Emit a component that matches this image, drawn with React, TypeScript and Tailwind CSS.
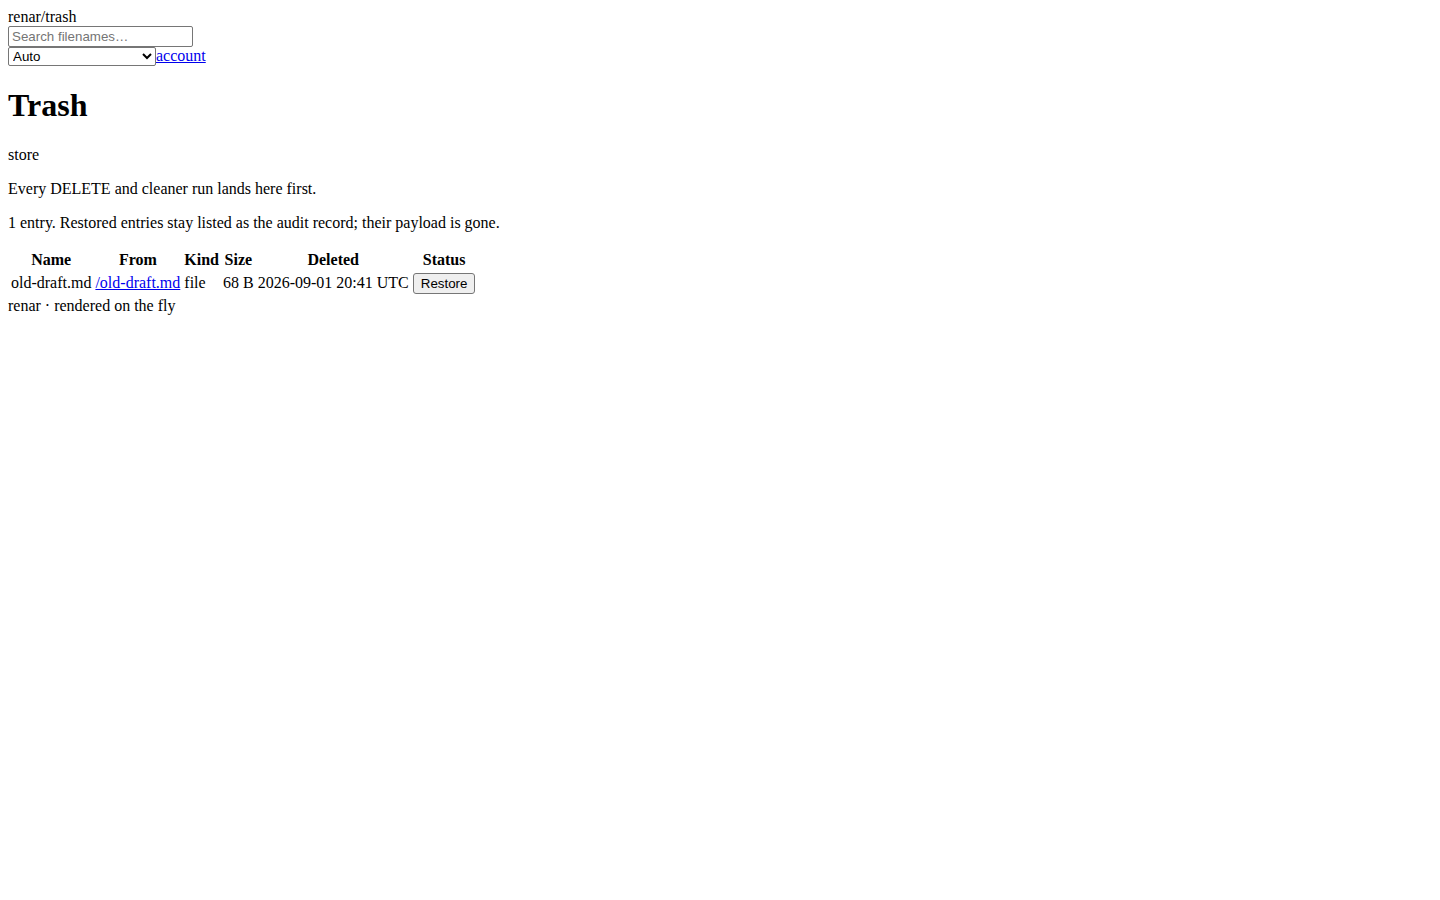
import React from "react";

const rows = [
  {
    name: "old-draft.md",
    from: "/old-draft.md",
    kind: "file",
    size: "68 B",
    deleted: "2026-09-01 20:41 UTC",
  },
];

export default function App() {
  return (
    <div className="min-h-screen bg-white p-2 font-['Liberation_Serif',serif] text-base leading-[normal] text-black">
      <header>
        <div>renar/trash</div>
        <form onSubmit={(e) => e.preventDefault()}>
          <input
            type="search"
            placeholder="Search filenames…"
            className="h-[21px] w-[185px] rounded-[2px] border border-[#767676] px-[3px] py-[1px] font-['Liberation_Sans',Arial,sans-serif] text-[13.33px] leading-[normal] placeholder:text-[#757575]"
          />
        </form>
        <div className="flex h-[19px] items-baseline">
          <select className="h-[19px] w-[148px] rounded-[2px] border border-[#767676] bg-white font-['Liberation_Sans',Arial,sans-serif] text-[13.33px] leading-[normal]">
            <option>Auto</option>
            <option>Light</option>
            <option>Dark</option>
          </select>
          <a href="#" className="text-[#0000ee] underline">
            account
          </a>
        </div>
      </header>

      <main>
        <h1 className="my-[21.44px] text-[32px] font-bold">Trash</h1>
        <p className="my-4">store</p>
        <p className="my-4">Every DELETE and cleaner run lands here first.</p>
        <p className="my-4">
          1 entry. Restored entries stay listed as the audit record; their payload is gone.
        </p>

        <table className="border-separate border-spacing-[2px]">
          <thead>
            <tr>
              <th className="p-[1px] text-center font-bold">Name</th>
              <th className="p-[1px] text-center font-bold">From</th>
              <th className="p-[1px] text-center font-bold">Kind</th>
              <th className="p-[1px] text-center font-bold">Size</th>
              <th className="p-[1px] text-center font-bold">Deleted</th>
              <th className="p-[1px] text-center font-bold">Status</th>
            </tr>
          </thead>
          <tbody>
            {rows.map((r) => (
              <tr key={r.name}>
                <td className="p-[1px]">{r.name}</td>
                <td className="p-[1px]">
                  <a href="#" className="text-[#0000ee] underline">
                    {r.from}
                  </a>
                </td>
                <td className="p-[1px]">{r.kind}</td>
                <td className="p-[1px]">{r.size}</td>
                <td className="p-[1px]">{r.deleted}</td>
                <td className="p-[1px]">
                  <button className="h-[21px] rounded-[3px] border border-[#767676] bg-[#efefef] px-[7px] py-[1px] font-['Liberation_Sans',Arial,sans-serif] text-[13.33px] leading-[normal]">
                    Restore
                  </button>
                </td>
              </tr>
            ))}
          </tbody>
        </table>
      </main>

      <footer>renar · rendered on the fly</footer>
    </div>
  );
}
